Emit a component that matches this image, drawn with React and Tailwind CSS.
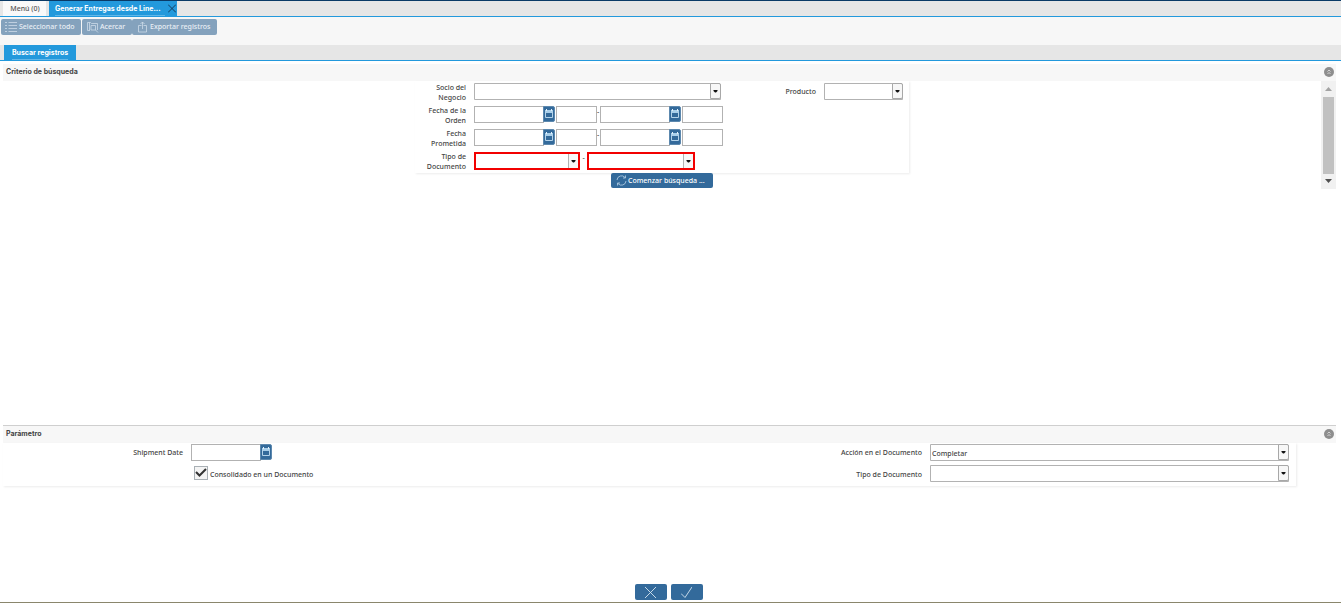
import React from "react";

const fieldBorder = "border border-[#b2b2b2] bg-white";

function CalendarIcon() {
  return (
    <svg width="10" height="12" viewBox="0 0 10 12" fill="none" aria-hidden="true">
      <path d="M1 2h8v3H1z" fill="#a9cfea" />
      <path d="M2.500 1v2M7.500 1v2" stroke="#e3f1fb" />
      <path d="M1.500 4v5.500h7V4" stroke="#b4d3ea" />
    </svg>
  );
}

function DateField({ id, label }) {
  return (
    <span className="flex items-start">
      <input id={id} aria-label={label} className={`h-[17px] w-[70px] rounded-none px-0.5 outline-none ${fieldBorder}`} />
      <button
        type="button"
        aria-label="Calendario"
        className="-ml-px flex h-4 w-3 items-center justify-center rounded-r-xs border border-[#5c88ae] bg-[#336a9b]"
      >
        <CalendarIcon />
      </button>
    </span>
  );
}

function DateTimeField({ id, label }) {
  return (
    <span className="flex items-start gap-px">
      <DateField id={id} label={label} />
      <input aria-label={`${label} hora`} className={`h-[17px] w-[41px] rounded-none px-0.5 outline-none ${fieldBorder}`} />
    </span>
  );
}

function DateRange({ id, label }) {
  return (
    <span className="flex items-start">
      <DateTimeField id={id} label={label} />
      <span className="w-[3px] leading-3">-</span>
      <DateTimeField id={`${id}-hasta`} label={`${label} hasta`} />
    </span>
  );
}

function Arrow({ className }) {
  return (
    <span aria-hidden="true" className={`pointer-events-none absolute flex items-center justify-center bg-[#f7f7f7] ${className}`}>
      <svg width="5" height="3" viewBox="0 0 5 3" fill="#111">
        <path d="M.5 0h4v1L3 2.500H2L.5 1z" />
      </svg>
    </span>
  );
}

function Combo({ id, label, options = [""], required, className }) {
  return (
    <span className={`relative block ${className}`}>
      <select
        id={id}
        aria-label={label}
        className={
          required
            ? "block h-[18px] w-full appearance-none rounded-none border-2 border-[#f20000] bg-white px-0.5 outline-none"
            : `block h-[17px] w-full appearance-none rounded-none rounded-tr-xs px-px pt-0.5 outline-none ${fieldBorder}`
        }
      >
        {options.map((o) => (
          <option key={o}>{o}</option>
        ))}
      </select>
      <Arrow
        className={
          required
            ? "top-0.5 right-0.5 h-3.5 w-2.5 border-l border-[#b2b2b2]"
            : "top-0 right-0 h-4 w-[11px] rounded-r-xs border border-[#a8a8a8]"
        }
      />
    </span>
  );
}

function Row({ htmlFor, label, children }) {
  return (
    <div className="flex h-[23px] items-start">
      <label htmlFor={htmlFor} className="w-[51px] pl-2 text-right leading-[10px]">
        {label}
      </label>
      <div className="ml-2 flex items-start">{children}</div>
    </div>
  );
}

function SectionHeader({ children }) {
  return (
    <div className="flex h-[17px] items-center justify-between bg-[#f7f7f7] pr-0.5 pb-0.5 pl-[3px]">
      <h2 className="font-['Inter','Liberation_Sans',sans-serif] text-[7px] leading-[13px] font-bold text-[#444]">{children}</h2>
      <button type="button" aria-label="Contraer" className="flex size-[10px] items-center justify-center rounded-full bg-[#8e8e8e]">
        <svg width="6" height="6" viewBox="0 0 6 6" fill="none" stroke="#dcdcdc" strokeWidth=".9" aria-hidden="true">
          <path d="M1.500 2.500L3 1 4.500 2.500M1.500 5L3 3.500 4.500 5" />
        </svg>
      </button>
    </div>
  );
}

function ToolButton({ icon, className, children }) {
  return (
    <button type="button" disabled className={`flex h-4 items-center rounded-xs bg-[#84a2bd] text-[#e9eff5] ${className}`}>
      <svg width="12" height="12" viewBox="0 0 12 12" fill="none" stroke="#cddbe8" strokeWidth=".8" aria-hidden="true">
        {icon}
      </svg>
      <span className="whitespace-nowrap">{children}</span>
    </button>
  );
}

export default function App() {
  return (
    <div className="flex min-h-screen flex-col border-t border-b border-t-[#0a3a66] border-b-[#8a866c] bg-white font-['Noto_Sans',sans-serif] text-[7px] leading-[10px] font-medium text-[#444]">
      <nav className="flex h-4 items-stretch gap-[3px] border-b border-[#2399dc] bg-[#e6e6e6] pl-[3px]">
        <a href="#menu" className="flex w-[43px] items-center justify-center bg-[#f9f9f9] pl-px text-[#555]">
          Menú (0)
        </a>
        <div className="flex w-32 items-center bg-[#2399dc] pl-1.5 font-['Inter','Liberation_Sans',sans-serif] font-bold text-white">
          <a href="#generar" className="w-[110px] border-b border-[#62b7e8] leading-[13px] whitespace-nowrap">
            Generar Entregas desde Line...
          </a>
          <button type="button" aria-label="Cerrar" className="ml-[3px]">
            <svg width="8" height="9" viewBox="0 0 8 9" stroke="#123b5c" strokeWidth="1" aria-hidden="true">
              <path d="M0 .5l8 8M8 .5l-8 8" />
            </svg>
          </button>
        </div>
      </nav>

      <div className="flex h-7 items-start bg-[#f7f7f7] pt-0.5 pl-px">
        <ToolButton
          className="mr-px w-20 gap-0.5 pl-[4px]"
          icon={<path d="M0 1.500h2M0 4.500h2M0 7.500h2M0 10.500h2M3.500 1.500H12M3.500 4.500H12M3.500 7.500H12M3.500 10.500H12" />}
        >
          Seleccionar todo
        </ToolButton>
        <ToolButton
          className="w-[50px] gap-px pl-[5px]"
          icon={
            <>
              <path d="M3 9.500H.5V1.500h3l1 1h6V9" />
              <path d="M4 4.500h4.500V9H4zM8.500 9l2.500 2.500M2.500 1.500v8" />
            </>
          }
        >
          Acercar
        </ToolButton>
        <ToolButton className="w-[85px] gap-px pl-[5px]" icon={<path d="M4.500 4.500h-3V11h8V4.500h-3M5.500 8V1M3.500 3l2-2 2 2" />}>
          Exportar registros
        </ToolButton>
      </div>

      <div className="flex h-4 border-b border-[#2399dc] bg-[#e6e6e6] pl-1">
        <a
          href="#buscar"
          className="flex w-[72px] items-center justify-center bg-[#2399dc] font-['Inter','Liberation_Sans',sans-serif] font-bold text-white"
        >
          <span className="border-b border-[#62b7e8] leading-[13px]">Buscar registros</span>
        </a>
      </div>

      <main className="flex grow flex-col pt-[3px] pr-[5px] pl-[3px]">
        <section className="grow">
          <SectionHeader>Criterio de búsqueda</SectionHeader>
          <div className="flex items-start">
            <div className="flex grow flex-col items-center">
              <form className="flex h-[92px] w-[494px] items-start justify-between pt-0.5 pr-1.5 shadow-[1px_1px_2px_#ececec]">
                <div>
                  <Row htmlFor="socio" label="Socio del Negocio">
                    <Combo id="socio" className="w-[247px]" />
                  </Row>
                  <Row htmlFor="orden" label="Fecha de la Orden">
                    <DateRange id="orden" label="Fecha de la Orden" />
                  </Row>
                  <Row htmlFor="prometida" label="Fecha Prometida">
                    <DateRange id="prometida" label="Fecha Prometida" />
                  </Row>
                  <Row htmlFor="tipo" label="Tipo de Documento">
                    <Combo id="tipo" required className="w-[106px]" />
                    <span className="w-[7px] text-center leading-3">-</span>
                    <Combo label="Tipo de Documento hasta" required className="w-[108px]" />
                  </Row>
                </div>
                <div className="flex items-start gap-2">
                  <label htmlFor="producto" className="pt-1">Producto</label>
                  <Combo id="producto" className="w-[79px]" />
                </div>
              </form>
              <button type="button" className="flex h-[15px] w-[102px] items-center gap-px rounded-xs bg-[#336a9b] pl-[5px] whitespace-nowrap text-white">
                <svg width="11" height="11" viewBox="0 0 11 11" fill="none" stroke="#b9d3e8" strokeWidth=".8" aria-hidden="true">
                  <path d="M1 5a4.500 4.500 0 0 1 8-2.500M9.500 .5v2.500H7M10 6a4.500 4.500 0 0 1-8 2.500M1.500 10.500V8H4" />
                </svg>
                Comenzar búsqueda ...
              </button>
            </div>
            <div className="flex h-[108px] w-[15px] flex-col items-center justify-between bg-[#f1f1f1] py-[6px]" aria-hidden="true">
              <svg width="7" height="4" viewBox="0 0 7 4" fill="#a3a3a3"><path d="M3.500 0L7 4H0z" /></svg>
              <div className="h-[77px] w-[11px] bg-[#c1c1c1]" />
              <svg width="7" height="4" viewBox="0 0 7 4" fill="#505050"><path d="M0 0h7L3.500 4z" /></svg>
            </div>
          </div>
        </section>

        <section className="h-[159px] border-t border-[#cfcfcf]">
          <SectionHeader>Parámetro</SectionHeader>
          <form className="mr-10 grid h-[43px] grid-cols-[188fr_551fr_188fr_366fr] content-start gap-y-1 pt-px shadow-[1px_1px_2px_#ececec]">
            <label htmlFor="shipment" className="pt-1 pr-2 text-right">Shipment Date</label>
            <DateField id="shipment" />
            <label htmlFor="accion" className="pt-1 pr-2 text-right">Acción en el Documento</label>
            <Combo id="accion" options={["Completar"]} className="mr-[7px]" />
            <span />
            <label className="flex items-start gap-0.5 pt-px pl-[3px]">
              <span className="relative flex size-3.5">
                <input type="checkbox" defaultChecked className="peer size-3.5 appearance-none border border-[#a9b0b5] bg-[#f4f4f4]" />
                <svg
                  width="12"
                  height="10"
                  viewBox="0 0 12 10"
                  fill="none"
                  stroke="#333"
                  strokeWidth="2"
                  aria-hidden="true"
                  className="pointer-events-none invisible absolute top-0.5 left-px peer-checked:visible"
                >
                  <path d="M1 4l3.500 3.500L11 1" />
                </svg>
              </span>
              <span className="pt-1">Consolidado en un Documento</span>
            </label>
            <label htmlFor="tipodoc" className="pt-[5px] pr-2 text-right">Tipo de Documento</label>
            <Combo id="tipodoc" className="mr-[7px]" />
          </form>
        </section>
      </main>

      <footer className="flex justify-center gap-1 pr-1 pb-0.5">
        <button type="button" aria-label="Cancelar" className="flex h-4 w-8 items-center justify-center rounded-xs bg-[#336a9b]">
          <svg width="11" height="11" viewBox="0 0 11 11" stroke="#d5e4f0" strokeWidth=".9" aria-hidden="true">
            <path d="M0 0l11 11M11 0L0 11" />
          </svg>
        </button>
        <button type="button" aria-label="Aceptar" className="flex h-4 w-8 items-center justify-center rounded-xs bg-[#336a9b]">
          <svg width="11" height="11" viewBox="0 0 11 11" fill="none" stroke="#d5e4f0" strokeWidth=".9" aria-hidden="true">
            <path d="M0 6.500L4 10.500 11 0" />
          </svg>
        </button>
      </footer>
    </div>
  );
}
